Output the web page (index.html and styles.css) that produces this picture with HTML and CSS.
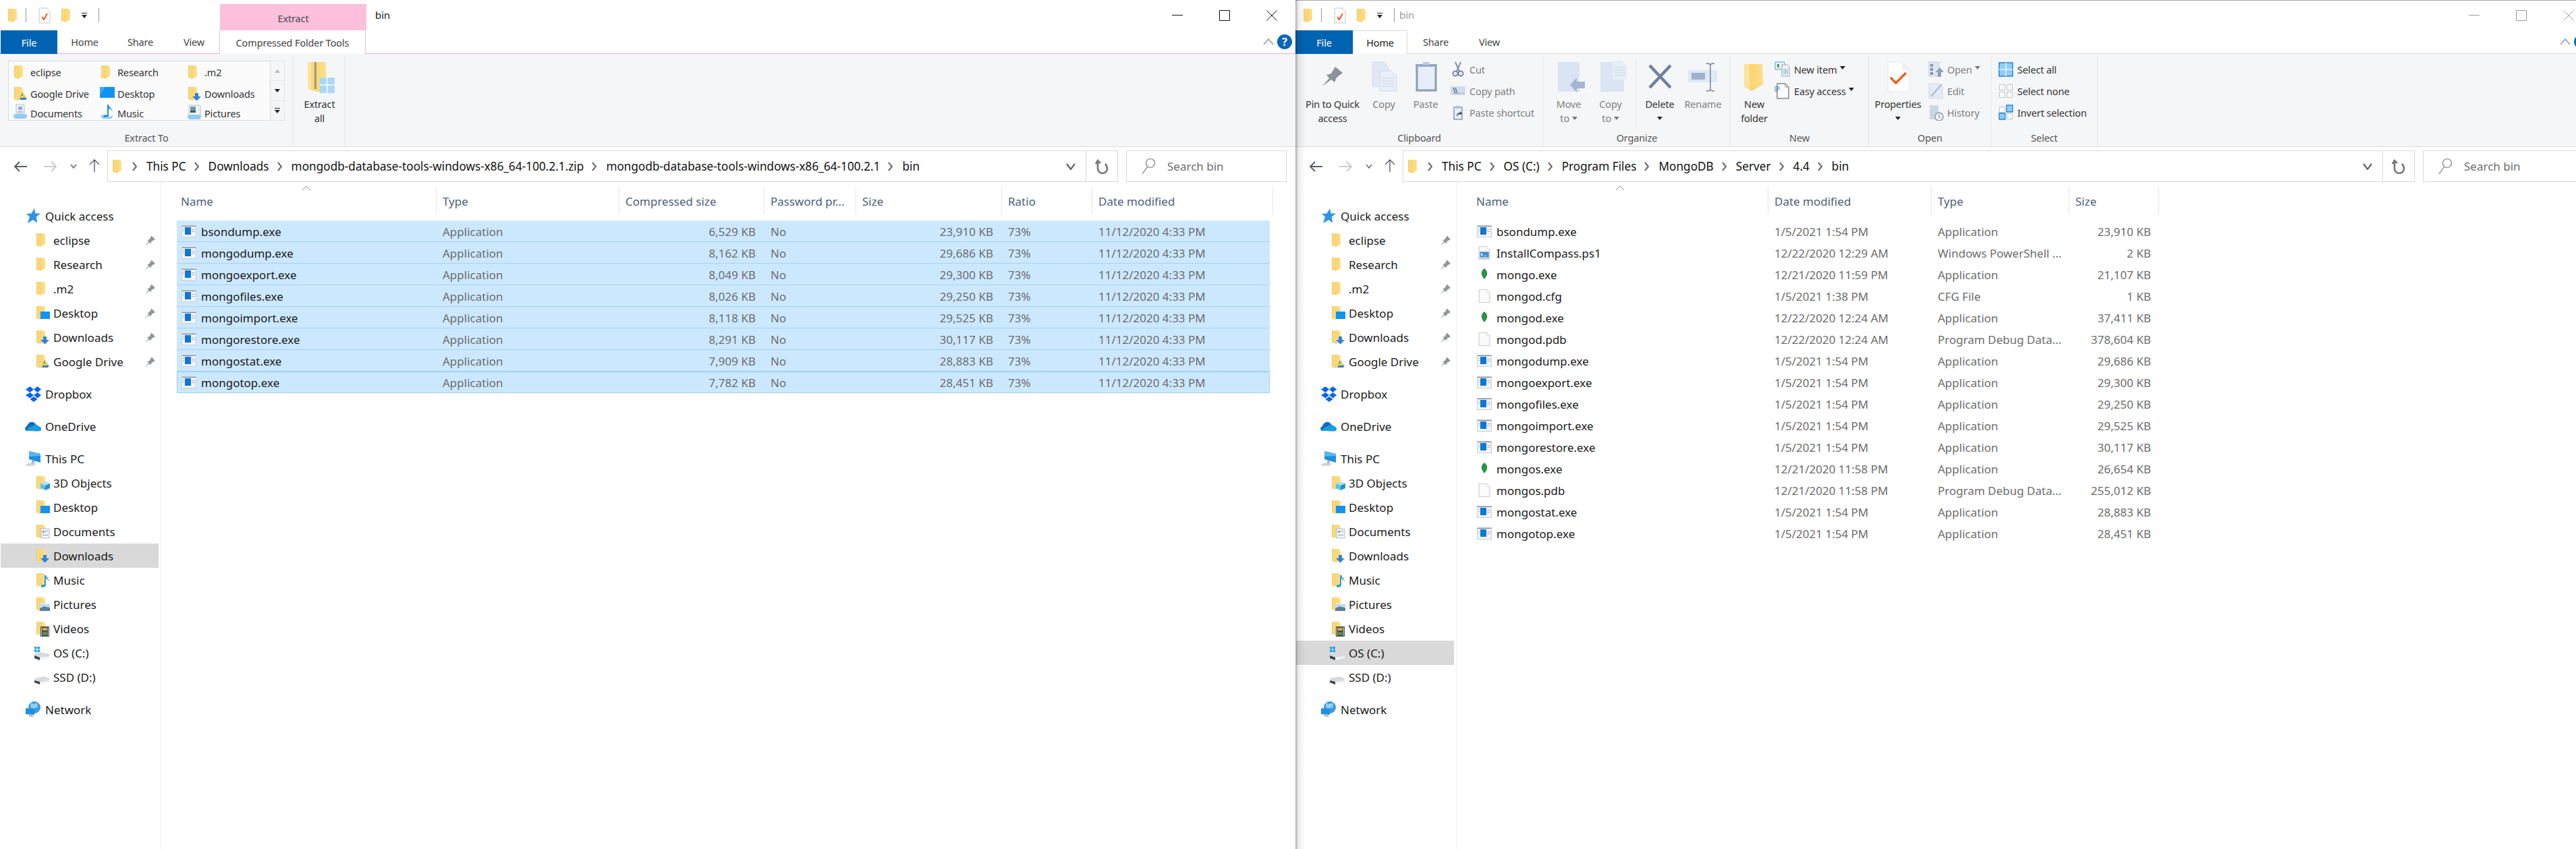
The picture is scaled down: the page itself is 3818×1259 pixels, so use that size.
FILE: index.html
```html
<!DOCTYPE html>
<html>
<head>
<meta charset="utf-8">
<title>bin</title>
<link rel="stylesheet" href="styles.css">
</head>
<body>

<!-- icon sprite -->
<svg class="sprite" xmlns="http://www.w3.org/2000/svg">
  <defs>
    <linearGradient id="fy" x1="0" x2="1" y1="0" y2="0">
      <stop offset="0" stop-color="#fde9ad"/><stop offset=".35" stop-color="#f9d46f"/><stop offset="1" stop-color="#fde08c"/>
    </linearGradient>
  </defs>
  <symbol id="fld" viewBox="0 0 24 24"><path d="M3 2h11l1 2h1v14l-7 4-6-2z" fill="url(#fy)"/><path d="M3 2h2v19l-2-1z" fill="#f3cf72"/></symbol>
  <symbol id="fld-desk" viewBox="0 0 24 24"><use href="#fld"/><path d="M9 10h14v11H9z" fill="#1193f1"/></symbol>
  <symbol id="fld-down" viewBox="0 0 24 24"><use href="#fld"/><path d="M13 11h5v5h4l-6.500 6.500L9 16h4z" fill="#2f82d8"/></symbol>
  <symbol id="fld-drive" viewBox="0 0 24 24"><use href="#fld"/><path d="M15 10l3 5h-4l-3 6z" fill="#1fa463"/><path d="M15 10h1l5 8h-5z" fill="#f4c63d"/><path d="M11 21h9l2-3h-9z" fill="#3277e0"/></symbol>
  <symbol id="fld-3d" viewBox="0 0 24 24"><use href="#fld"/><path d="M9 13l7-3 7 3-7 3z" fill="#a9e3f7"/><path d="M9 13l7 3v7l-7-3z" fill="#57c2ea"/><path d="M23 13l-7 3v7l7-3z" fill="#1c95c9"/></symbol>
  <symbol id="fld-docs" viewBox="0 0 24 24"><use href="#fld"/><path d="M10 8h12v14H10z" fill="#eef2f6" stroke="#b8bfc7"/><path d="M12 11h3v3h-3zM12 17h8v1h-8zM16 11h4v1h-4z" fill="#7ba6cf"/></symbol>
  <symbol id="fld-music" viewBox="0 0 24 24"><use href="#fld"/><path d="M15 5h2c1 4 5 5 5 10-1-3-3-4-5-5v10c0 2-3 3-5 3s-3-2-1-3.500c1-.8 3-1 4-.5z" fill="#2b9fdc"/></symbol>
  <symbol id="fld-pics" viewBox="0 0 24 24"><use href="#fld"/><path d="M8 11h15v11H8z" fill="#f0f3f6"/><path d="M8 18l6-3 9 2v5H8z" fill="#5b7f9c"/><path d="M8 12h15v4l-9-1-6 2z" fill="#b8dcf3"/></symbol>
  <symbol id="fld-video" viewBox="0 0 24 24"><use href="#fld"/><path d="M9 9h13v15H9z" fill="#3d4a52"/><path d="M12 11h7v4h-7z" fill="#d6a844"/><path d="M12 17h7v5h-7z" fill="#5e8a4e"/><path d="M10 10h1v13h-1zM20 10h1v13h-1z" fill="#cfd3d6"/></symbol>
  <symbol id="desk" viewBox="0 0 24 24"><path d="M1 2h22v16H1z" fill="#1193f1"/><path d="M1 2h8L1 14z" fill="#3aa8f5"/></symbol>
  <symbol id="docs" viewBox="0 0 24 24"><path d="M6 1h12v16H6z" fill="#eef2f6" stroke="#b8bfc7"/><path d="M9 4h6v5H9zM8 11h8v1H8zM8 13h8v1H8z" fill="#8db3d6"/><path d="M1 17l5-2h12l5 2-3 5H4z" fill="#8fcdf0"/></symbol>
  <symbol id="music" viewBox="0 0 24 24"><path d="M12 1h2c1 5 5 6 6 11-2-3-3-4-6-5v11c0 2-4 4-7 3s-2-4 1-4.500c1-.3 3-.5 4 0z" fill="#2390d8"/><path d="M2 18l4-2 1 4 9-1 5-2-3 5H5z" fill="#8fcdf0"/></symbol>
  <symbol id="pics" viewBox="0 0 24 24"><path d="M4 2h17v15H4z" fill="#eef2f6" stroke="#b8bfc7"/><path d="M6 4h8v9H6z" fill="#6d97b5"/><path d="M6 10h8v3H6z" fill="#3f5f46"/><path d="M1 18l5-2h12l5 2-3 5H4z" fill="#8fcdf0"/></symbol>

  <symbol id="star" viewBox="0 0 24 24"><path d="M14 1l1.500 7.500H23l-6 5 1 9-6-4.500L4 23l3-9.500L2 9l7.500-.5z" fill="#2e95e6"/></symbol>
  <symbol id="dropbox" viewBox="0 0 24 24"><path d="M7.500 1L1 5.500 7.500 10 13 5.500zM18.500 1L13 5.500 18.500 10 24 5.500zM1 14l6.500 4.500L13 14 7.500 10zM18.500 10L13 14l5.500 4.500L24 14zM7.500 20l5.500 4 5.500-4-5.500-4z" fill="#0a62f5"/></symbol>
  <symbol id="onedrive" viewBox="0 0 24 24"><path d="M2 19C-1 17 0 13 3 12c1-4 5-7 9-6 3 1 4 3 5 5l-8 8z" fill="#0f6cbd"/><path d="M2 19c-.5 0 21 1 21 0 2-2 1-7-3-7-2-3-7-3-9 1-3-1-7 2-9 6z" fill="#1a9ce0"/></symbol>
  <symbol id="pc" viewBox="0 0 24 24"><path d="M6 1l17 4v13L6 13z" fill="#1e8fe0"/><path d="M6 1l17 4v3L6 9z" fill="#58b7f0"/><path d="M10 15h4v5h-4z" fill="#a8b3bb"/><path d="M0 21l8-3 9 2-4 3H3z" fill="#d0d6da"/></symbol>
  <symbol id="net" viewBox="0 0 24 24"><circle cx="14" cy="9" r="9" fill="#3d9be0"/><path d="M9 2c3 3 7 2 9 0l1 6c-3 3-9 3-11 0z" fill="#8ed0f5"/><path d="M1 10l13 2v8L1 19z" fill="#1e8fe0"/><path d="M5 20h6l2 3H7z" fill="#b6c0c8"/></symbol>
  <symbol id="drive-win" viewBox="0 0 24 24"><path d="M0 3h3.500v3.500H0zM4.500 3H8v3.500H4.500zM0 7.500h3.500V11H0zM4.500 7.500H8V11H4.500z" fill="#17a5e6"/><path d="M0 13l8-2 14 3v3L8 23 0 20z" fill="#d7dadd"/><path d="M0 16l8 3v4l-8-3z" fill="#3d4347"/><path d="M8 19l14-2v3L8 23z" fill="#f2f3f4"/></symbol>
  <symbol id="drive" viewBox="0 0 24 24"><path d="M0 14l14-3 8 3v3L8 23l-8-3z" fill="#d7dadd"/><path d="M0 17l8 2v4l-8-3z" fill="#3d4347"/><path d="M8 19l14-2v3L8 23z" fill="#f2f3f4"/></symbol>
  <symbol id="pin" viewBox="0 0 16 16"><path d="M1 15l5-5.500-2-2 3-1 3-5 5 5-5 3-1 3-2-2z" fill="#8f9599"/></symbol>

  <symbol id="exe" viewBox="0 0 22 18"><path d="M0 0h22v18H0z" fill="#c9cdd0"/><path d="M1 1h20v16H1z" fill="#f3f5f6"/><path d="M1 1h20v1H1z" fill="#7a848c"/><path d="M5 3h9v11H5z" fill="#0b78d8"/><path d="M15 6h5v1h-5zM15 9h5v1h-5zM2 5h2v1H2zM2 8h2v1H2z" fill="#a8b0b6"/></symbol>
  <symbol id="leaf" viewBox="0 0 22 18"><path d="M11 0c3 3 5 5 4 9s-3 5-4 7c-1-2-3-3-4-7s1-6 4-9z" fill="#2a9240"/></symbol>
  <symbol id="file" viewBox="0 0 22 24"><path d="M1.500.5h14l5 5v18h-19z" fill="#fbfbfb" stroke="#bcbcbc"/><path d="M15.500.5v5h5" fill="#fff" stroke="#cfcfcf"/></symbol>
  <symbol id="ps1" viewBox="0 0 22 24"><use href="#file"/><path d="M3 10h16v10H3z" fill="#3b8fd6"/><path d="M5 12l4 3-4 3zM10 17h5v1h-5z" fill="#dff1ff"/><path d="M0 20h20v4H0z" fill="#cdd2d6"/></symbol>

  <!-- ribbon, large -->
  <symbol id="r-pin" viewBox="0 0 48 54"><path d="M9 38l10-12-4-5 7-2 6-10 11 9-9 7-3 7-5-4z" fill="#8b9498"/></symbol>
  <symbol id="r-copy" viewBox="0 0 48 54"><path d="M7 2h17l7 8v28H7z" fill="#e0e8f4" stroke="#d3ddec"/><path d="M18 15h17l8 8v22H18z" fill="#e9eff8" stroke="#ccd8e9"/><path d="M21 26h18M21 30h18M21 34h18M21 38h18" stroke="#cbd6e6"/></symbol>
  <symbol id="r-paste" viewBox="0 0 48 54"><path d="M11 7h28v37H11z" fill="#e6eefa" stroke="#8b9cba" stroke-width="3"/><path d="M9 5h32v4H9z" fill="#98a8c2"/><path d="M20 2h10v4H20z" fill="#c4cdd9"/></symbol>
  <symbol id="r-move" viewBox="0 0 48 54"><path d="M8 2h32v44H8z" fill="#dae4f2"/><path d="M26 36l10-11v6h12v10H36v6z" fill="#a2b5d1"/></symbol>
  <symbol id="r-copyto" viewBox="0 0 48 54"><path d="M9 2h22l13 13v31H9z" fill="#dae4f2"/><path d="M27 0h14l8 8v20H27z" fill="#e7eef8"/><path d="M30 10h16M30 14h16M30 18h16M30 22h16" stroke="#cad6e6"/></symbol>
  <symbol id="r-del" viewBox="0 0 48 54"><path d="M9 7l31 33M40 7L9 40" stroke="#6f819f" stroke-width="4.500" fill="none"/></symbol>
  <symbol id="r-rename" viewBox="0 0 48 54"><path d="M2 14h43v18H2z" fill="#dfe8f5"/><path d="M7 18h20v10H7z" fill="#9fb1cc"/><path d="M35 7v35M29 4c3 0 6 1 6 3 0-2 3-3 6-3M29 45c3 0 6-1 6-3 0 2 3 3 6 3" fill="none" stroke="#8a96a8" stroke-width="1.800"/></symbol>
  <symbol id="r-newf" viewBox="0 0 48 54"><path d="M9 5h27l1 26 1 4-18 10-11-7z" fill="url(#fy)"/><path d="M9 5h6l4 33-10 1z" fill="#fbe39e"/></symbol>
  <symbol id="r-prop" viewBox="0 0 48 54"><path d="M9 2h21l11 12v32H9z" fill="#fdfdfe" stroke="#e3e6ea"/><path d="M30 2v12h11" fill="#eef0f3"/><path d="M13 25l8 8 15-15" fill="none" stroke="#e8632a" stroke-width="3.500"/></symbol>
  <symbol id="r-extract" viewBox="0 0 48 54"><path d="M6 2h27v44l-12 0-15-4z" fill="url(#fy)"/><path d="M16 2h3v40h-3z" fill="#a39a84"/><path d="M24 25h22v23H24z" fill="#a9d8f6"/><path d="M35 25v23M24 36h22" stroke="#e6f4fc" stroke-width="2"/></symbol>

  <!-- ribbon, small -->
  <symbol id="s-cut" viewBox="0 0 24 24"><path d="M8 1l6 14M16 1l-6 14" stroke="#8792a6" stroke-width="2" fill="none"/><circle cx="8" cy="18" r="3.500" fill="none" stroke="#7888a3" stroke-width="2"/><circle cx="16" cy="18" r="3.500" fill="none" stroke="#7888a3" stroke-width="2"/></symbol>
  <symbol id="s-path" viewBox="0 0 24 24"><path d="M1 5h22v13H1z" fill="#cfdcee"/><path d="M5 7l3 9M8 7l3 9" stroke="#55627a" stroke-width="1.200"/><path d="M13 15h1v1h-1zM16 15h1v1h-1zM19 15h1v1h-1z" fill="#55627a"/></symbol>
  <symbol id="s-short" viewBox="0 0 24 24"><path d="M6 4h12v18H6z" fill="#e6eefa" stroke="#8b9cba" stroke-width="1.600"/><path d="M9 2h6v4H9z" fill="#b7c2d2"/><path d="M10 18c0-4 2-6 5-6v-2l3 3-3 3v-2c-2 0-3 1-5 4z" fill="#3c4a5e"/></symbol>
  <symbol id="s-newitem" viewBox="0 0 24 24"><path d="M1 1h14v11H1z" fill="#e9f2f8" stroke="#5aa4d4"/><path d="M4 4h3v5H4z" fill="#5f8a57"/><path d="M11 5h8l3 3v14H11z" fill="#eef1f5" stroke="#9aa4af"/><path d="M13 11h7v8h-7z" fill="#bcd1e8"/></symbol>
  <symbol id="s-easy" viewBox="0 0 24 24"><path d="M4 1h12l5 5v17H4z" fill="#fbfbfb" stroke="#4c4f52"/><path d="M16 1v5h5" fill="none" stroke="#8a8d90"/><path d="M0 6h8M0 9h8M0 12h5" stroke="#2a6fb0"/></symbol>
  <symbol id="s-open" viewBox="0 0 24 24"><path d="M2 1h15v21H2z" fill="#dfe6f0" stroke="#c4cedc"/><path d="M4 4h4v4H4zM4 10h4v4H4zM4 16h4v4H4z" fill="#8493aa"/><path d="M18 9l6 7h-4v7h-5v-7h-3z" fill="#8aa0bd"/></symbol>
  <symbol id="s-edit" viewBox="0 0 24 24"><path d="M2 1h14l6 5v17H2z" fill="#e3ebf5" stroke="#ced9e7"/><path d="M5 20L21 2" stroke="#a9b9cf" stroke-width="2"/></symbol>
  <symbol id="s-hist" viewBox="0 0 24 24"><path d="M3 1h13v21H3z" fill="#ccd7e6"/><circle cx="17" cy="18" r="6" fill="#eef1f5" stroke="#8e99a8" stroke-width="1.500"/><path d="M17 15v3l2 2" stroke="#66707e" fill="none"/></symbol>
  <symbol id="s-all" viewBox="0 0 24 24"><path d="M2 2h20v20H2z" fill="#90ccf6" stroke="#1e88d8" stroke-width="1.500"/><path d="M12 2v20M2 12h20" stroke="#e9f6fe" stroke-width="1.500"/></symbol>
  <symbol id="s-none" viewBox="0 0 24 24"><path d="M2.500 2.500h8v8h-8zM13.500 2.500h8v8h-8zM2.500 13.500h8v8h-8zM13.500 13.500h8v8h-8z" fill="#fafbfc" stroke="#bfc4ca"/></symbol>
  <symbol id="s-inv" viewBox="0 0 24 24"><path d="M2.500 3.500h8v8h-8zM13.500 13.500h8v8h-8z" fill="#fafbfc" stroke="#bfc4ca"/><path d="M13 1h9v10h-9zM2 13h9v9H2z" fill="#90ccf6" stroke="#1e88d8" stroke-width="1.300"/></symbol>
  <symbol id="q-check" viewBox="0 0 24 24"><path d="M4 1h11l5 5v17H4z" fill="#fdfdfd" stroke="#c6c6c6"/><path d="M8 14l3 4 5-9" fill="none" stroke="#e3521f" stroke-width="1.800"/></symbol>
</svg>

<!-- left window: inside the zip -->
<div class="window win-zip">
  <div class="titlebar">
    <div class="qat">
      <svg class="ico"><use href="#fld"/></svg>
      <i class="q-sep"></i>
      <svg class="ico q-gap"><use href="#q-check"/></svg>
      <svg class="ico"><use href="#fld"/></svg>
      <span class="q-drop"><b></b><i class="caret"></i></span>
      <i class="q-sep q-end"></i>
    </div>
    <div class="context-tab">Extract</div>
    <div class="title title-zip">bin</div>
    <div class="winbtns">
      <span class="wb"><svg class="wb-ico"><path d="M0 7.500h16" /></svg></span>
      <span class="wb"><svg class="wb-ico"><path d="M.5.5h15v15H.5z" /></svg></span>
      <span class="wb"><svg class="wb-ico"><path d="M.5.5l15 15M15.500.5l-15 15" /></svg></span>
    </div>
  </div>

  <div class="tabs tabs-zip">
    <div class="tab tab-file tab-file-zip">File</div>
    <div class="tab tab-home">Home</div>
    <div class="tab tab-share">Share</div>
    <div class="tab tab-view">View</div>
    <div class="tab tab-tools">Compressed Folder Tools</div>
    <div class="tabs-end">
      <svg class="collapse"><path d="M1 10l7-8 7 8"/></svg>
      <span class="help">?</span>
    </div>
  </div>

  <div class="ribbon">
    <div class="group g-extract-to">
      <div class="group-main gallery-wrap">
        <div class="gallery">
          <div class="g-item"><svg class="ico"><use href="#fld"/></svg>eclipse</div>
          <div class="g-item"><svg class="ico"><use href="#fld"/></svg>Research</div>
          <div class="g-item"><svg class="ico"><use href="#fld"/></svg>.m2</div>
          <div class="g-item"><svg class="ico"><use href="#fld-drive"/></svg>Google Drive</div>
          <div class="g-item"><svg class="ico"><use href="#desk"/></svg>Desktop</div>
          <div class="g-item"><svg class="ico"><use href="#fld-down"/></svg>Downloads</div>
          <div class="g-item"><svg class="ico"><use href="#docs"/></svg>Documents</div>
          <div class="g-item"><svg class="ico"><use href="#music"/></svg>Music</div>
          <div class="g-item"><svg class="ico"><use href="#pics"/></svg>Pictures</div>
        </div>
        <div class="gallery-scroll">
          <span class="gs"><i class="caret caret-up"></i></span>
          <span class="gs"><i class="caret"></i></span>
          <span class="gs"><b></b><i class="caret"></i></span>
        </div>
      </div>
      <div class="group-label">Extract To</div>
    </div>
    <div class="group g-extract-all">
      <div class="group-main">
        <div class="lg lg-full"><svg class="lg-ico"><use href="#r-extract"/></svg><span class="lg-label">Extract<br>all</span></div>
      </div>
      <div class="group-label"></div>
    </div>
  </div>

  <div class="addrbar">
    <div class="navbtns">
      <svg class="arrow"><path d="M20 8H2M9 1L2 8l7 7"/></svg>
      <svg class="arrow arrow-off"><path d="M0 8h18M11 1l7 7-7 7"/></svg>
      <svg class="mini-chev"><path d="M1 1l4 5 4-5"/></svg>
      <svg class="arrow-up"><path d="M8 20V2M1 9l7-7 7 7"/></svg>
    </div>
    <div class="addr">
      <svg class="ico addr-folder"><use href="#fld"/></svg>
      <svg class="crumb-sep"><path d="M1 1l5 6-5 6"/></svg><span>This PC</span>
      <svg class="crumb-sep"><path d="M1 1l5 6-5 6"/></svg><span>Downloads</span>
      <svg class="crumb-sep"><path d="M1 1l5 6-5 6"/></svg><span>mongodb-database-tools-windows-x86_64-100.2.1.zip</span>
      <svg class="crumb-sep"><path d="M1 1l5 6-5 6"/></svg><span>mongodb-database-tools-windows-x86_64-100.2.1</span>
      <svg class="crumb-sep"><path d="M1 1l5 6-5 6"/></svg><span>bin</span>
      <span class="addr-drop"><svg class="drop-chev"><path d="M1 1l6 8 6-8"/></svg></span>
      <span class="addr-refresh"><svg class="refresh"><path d="M4 4v10a7 7 0 0 0 14 0c0-3-1-5-3-7M1 7l3-5 4 4"/></svg></span>
    </div>
    <div class="search"><svg class="lens"><circle cx="14" cy="8" r="6.500"/><path d="M10 13L2 24"/></svg>Search bin</div>
  </div>

  <div class="body">
    <div class="nav">
      <div class="nav-group">
        <div class="nav-row top"><svg class="ico"><use href="#star"/></svg>Quick access</div>
        <div class="nav-row"><svg class="ico"><use href="#fld"/></svg>eclipse<svg class="pin"><use href="#pin"/></svg></div>
        <div class="nav-row"><svg class="ico"><use href="#fld"/></svg>Research<svg class="pin"><use href="#pin"/></svg></div>
        <div class="nav-row"><svg class="ico"><use href="#fld"/></svg>.m2<svg class="pin"><use href="#pin"/></svg></div>
        <div class="nav-row"><svg class="ico"><use href="#fld-desk"/></svg>Desktop<svg class="pin"><use href="#pin"/></svg></div>
        <div class="nav-row"><svg class="ico"><use href="#fld-down"/></svg>Downloads<svg class="pin"><use href="#pin"/></svg></div>
        <div class="nav-row"><svg class="ico"><use href="#fld-drive"/></svg>Google Drive<svg class="pin"><use href="#pin"/></svg></div>
      </div>
      <div class="nav-group"><div class="nav-row top"><svg class="ico"><use href="#dropbox"/></svg>Dropbox</div></div>
      <div class="nav-group"><div class="nav-row top"><svg class="ico"><use href="#onedrive"/></svg>OneDrive</div></div>
      <div class="nav-group">
        <div class="nav-row top"><svg class="ico"><use href="#pc"/></svg>This PC</div>
        <div class="nav-row"><svg class="ico"><use href="#fld-3d"/></svg>3D Objects</div>
        <div class="nav-row"><svg class="ico"><use href="#fld-desk"/></svg>Desktop</div>
        <div class="nav-row"><svg class="ico"><use href="#fld-docs"/></svg>Documents</div>
        <div class="nav-row active"><svg class="ico"><use href="#fld-down"/></svg>Downloads</div>
        <div class="nav-row"><svg class="ico"><use href="#fld-music"/></svg>Music</div>
        <div class="nav-row"><svg class="ico"><use href="#fld-pics"/></svg>Pictures</div>
        <div class="nav-row"><svg class="ico"><use href="#fld-video"/></svg>Videos</div>
        <div class="nav-row"><svg class="ico"><use href="#drive-win"/></svg>OS (C:)</div>
        <div class="nav-row"><svg class="ico"><use href="#drive"/></svg>SSD (D:)</div>
      </div>
      <div class="nav-group"><div class="nav-row top"><svg class="ico"><use href="#net"/></svg>Network</div></div>
    </div>

    <div class="list">
      <div class="head cols-zip">
        <span class="hcell"><svg class="sort"><path d="M1 7l6-6 6 6"/></svg>Name</span>
        <span class="hcell">Type</span>
        <span class="hcell">Compressed size</span>
        <span class="hcell">Password pr...</span>
        <span class="hcell">Size</span>
        <span class="hcell">Ratio</span>
        <span class="hcell">Date modified</span>
      </div>
      <div class="row sel cols-zip"><span class="cell name"><svg class="fi"><use href="#exe"/></svg>bsondump.exe</span><span class="cell">Application</span><span class="cell num">6,529 KB</span><span class="cell">No</span><span class="cell num">23,910 KB</span><span class="cell">73%</span><span class="cell">11/12/2020 4:33 PM</span></div>
      <div class="row sel cols-zip"><span class="cell name"><svg class="fi"><use href="#exe"/></svg>mongodump.exe</span><span class="cell">Application</span><span class="cell num">8,162 KB</span><span class="cell">No</span><span class="cell num">29,686 KB</span><span class="cell">73%</span><span class="cell">11/12/2020 4:33 PM</span></div>
      <div class="row sel cols-zip"><span class="cell name"><svg class="fi"><use href="#exe"/></svg>mongoexport.exe</span><span class="cell">Application</span><span class="cell num">8,049 KB</span><span class="cell">No</span><span class="cell num">29,300 KB</span><span class="cell">73%</span><span class="cell">11/12/2020 4:33 PM</span></div>
      <div class="row sel cols-zip"><span class="cell name"><svg class="fi"><use href="#exe"/></svg>mongofiles.exe</span><span class="cell">Application</span><span class="cell num">8,026 KB</span><span class="cell">No</span><span class="cell num">29,250 KB</span><span class="cell">73%</span><span class="cell">11/12/2020 4:33 PM</span></div>
      <div class="row sel cols-zip"><span class="cell name"><svg class="fi"><use href="#exe"/></svg>mongoimport.exe</span><span class="cell">Application</span><span class="cell num">8,118 KB</span><span class="cell">No</span><span class="cell num">29,525 KB</span><span class="cell">73%</span><span class="cell">11/12/2020 4:33 PM</span></div>
      <div class="row sel cols-zip"><span class="cell name"><svg class="fi"><use href="#exe"/></svg>mongorestore.exe</span><span class="cell">Application</span><span class="cell num">8,291 KB</span><span class="cell">No</span><span class="cell num">30,117 KB</span><span class="cell">73%</span><span class="cell">11/12/2020 4:33 PM</span></div>
      <div class="row sel cols-zip"><span class="cell name"><svg class="fi"><use href="#exe"/></svg>mongostat.exe</span><span class="cell">Application</span><span class="cell num">7,909 KB</span><span class="cell">No</span><span class="cell num">28,883 KB</span><span class="cell">73%</span><span class="cell">11/12/2020 4:33 PM</span></div>
      <div class="row sel focus cols-zip"><span class="cell name"><svg class="fi"><use href="#exe"/></svg>mongotop.exe</span><span class="cell">Application</span><span class="cell num">7,782 KB</span><span class="cell">No</span><span class="cell num">28,451 KB</span><span class="cell">73%</span><span class="cell">11/12/2020 4:33 PM</span></div>
    </div>
  </div>
</div>

<!-- right window: program files -->
<div class="window win-db">
  <div class="titlebar">
    <div class="qat">
      <svg class="ico"><use href="#fld"/></svg>
      <i class="q-sep"></i>
      <svg class="ico q-gap"><use href="#q-check"/></svg>
      <svg class="ico"><use href="#fld"/></svg>
      <span class="q-drop"><b></b><i class="caret"></i></span>
      <i class="q-sep q-end"></i>
    </div>
    <div class="title title-db">bin</div>
    <div class="winbtns winbtns-off">
      <span class="wb"><svg class="wb-ico"><path d="M0 7.500h16" /></svg></span>
      <span class="wb"><svg class="wb-ico"><path d="M.5.5h15v15H.5z" /></svg></span>
      <span class="wb"><svg class="wb-ico"><path d="M.5.5l15 15M15.500.5l-15 15" /></svg></span>
    </div>
  </div>

  <div class="tabs">
    <div class="tab tab-file">File</div>
    <div class="tab tab-home on">Home</div>
    <div class="tab tab-share">Share</div>
    <div class="tab tab-view">View</div>
    <div class="tabs-end">
      <svg class="collapse"><path d="M1 10l7-8 7 8"/></svg>
      <span class="help"></span>
    </div>
  </div>

  <div class="ribbon">
    <div class="group g-clipboard">
      <div class="group-main">
        <div class="lg lg-pin"><svg class="lg-ico"><use href="#r-pin"/></svg><span class="lg-label">Pin to Quick<br>access</span></div>
        <div class="lg off"><svg class="lg-ico"><use href="#r-copy"/></svg><span class="lg-label">Copy</span></div>
        <div class="lg off"><svg class="lg-ico"><use href="#r-paste"/></svg><span class="lg-label">Paste</span></div>
        <div class="smalls smalls-clip">
          <div class="sm off"><svg class="ico"><use href="#s-cut"/></svg>Cut</div>
          <div class="sm off"><svg class="ico"><use href="#s-path"/></svg>Copy path</div>
          <div class="sm off"><svg class="ico"><use href="#s-short"/></svg>Paste shortcut</div>
        </div>
      </div>
      <div class="group-label">Clipboard</div>
    </div>
    <div class="group g-organize">
      <div class="group-main">
        <div class="lg off"><svg class="lg-ico"><use href="#r-move"/></svg><span class="lg-label">Move<br>to <i class="caret"></i></span></div>
        <div class="lg off"><svg class="lg-ico"><use href="#r-copyto"/></svg><span class="lg-label">Copy<br>to <i class="caret"></i></span></div>
        <i class="inner-sep"></i>
        <div class="lg"><svg class="lg-ico"><use href="#r-del"/></svg><span class="lg-label">Delete<br><i class="caret"></i></span></div>
        <div class="lg lg-rename off"><svg class="lg-ico"><use href="#r-rename"/></svg><span class="lg-label">Rename</span></div>
      </div>
      <div class="group-label">Organize</div>
    </div>
    <div class="group g-new">
      <div class="group-main">
        <div class="lg lg-newf"><svg class="lg-ico"><use href="#r-newf"/></svg><span class="lg-label">New<br>folder</span></div>
        <div class="smalls">
          <div class="sm"><svg class="ico"><use href="#s-newitem"/></svg>New item <i class="caret"></i></div>
          <div class="sm"><svg class="ico"><use href="#s-easy"/></svg>Easy access <i class="caret"></i></div>
        </div>
      </div>
      <div class="group-label">New</div>
    </div>
    <div class="group g-open">
      <div class="group-main">
        <div class="lg lg-prop"><svg class="lg-ico"><use href="#r-prop"/></svg><span class="lg-label">Properties<br><i class="caret"></i></span></div>
        <div class="smalls smalls-open">
          <div class="sm off"><svg class="ico"><use href="#s-open"/></svg>Open <i class="caret"></i></div>
          <div class="sm off"><svg class="ico"><use href="#s-edit"/></svg>Edit</div>
          <div class="sm off"><svg class="ico"><use href="#s-hist"/></svg>History</div>
        </div>
      </div>
      <div class="group-label">Open</div>
    </div>
    <div class="group g-select">
      <div class="group-main">
        <div class="smalls">
          <div class="sm"><svg class="ico"><use href="#s-all"/></svg>Select all</div>
          <div class="sm"><svg class="ico"><use href="#s-none"/></svg>Select none</div>
          <div class="sm"><svg class="ico"><use href="#s-inv"/></svg>Invert selection</div>
        </div>
      </div>
      <div class="group-label">Select</div>
    </div>
  </div>

  <div class="addrbar">
    <div class="navbtns">
      <svg class="arrow"><path d="M20 8H2M9 1L2 8l7 7"/></svg>
      <svg class="arrow arrow-off"><path d="M0 8h18M11 1l7 7-7 7"/></svg>
      <svg class="mini-chev"><path d="M1 1l4 5 4-5"/></svg>
      <svg class="arrow-up"><path d="M8 20V2M1 9l7-7 7 7"/></svg>
    </div>
    <div class="addr">
      <svg class="ico addr-folder"><use href="#fld"/></svg>
      <svg class="crumb-sep"><path d="M1 1l5 6-5 6"/></svg><span>This PC</span>
      <svg class="crumb-sep"><path d="M1 1l5 6-5 6"/></svg><span>OS (C:)</span>
      <svg class="crumb-sep"><path d="M1 1l5 6-5 6"/></svg><span>Program Files</span>
      <svg class="crumb-sep"><path d="M1 1l5 6-5 6"/></svg><span>MongoDB</span>
      <svg class="crumb-sep"><path d="M1 1l5 6-5 6"/></svg><span>Server</span>
      <svg class="crumb-sep"><path d="M1 1l5 6-5 6"/></svg><span>4.4</span>
      <svg class="crumb-sep"><path d="M1 1l5 6-5 6"/></svg><span>bin</span>
      <span class="addr-drop"><svg class="drop-chev"><path d="M1 1l6 8 6-8"/></svg></span>
      <span class="addr-refresh"><svg class="refresh"><path d="M4 4v10a7 7 0 0 0 14 0c0-3-1-5-3-7M1 7l3-5 4 4"/></svg></span>
    </div>
    <div class="search"><svg class="lens"><circle cx="14" cy="8" r="6.500"/><path d="M10 13L2 24"/></svg>Search bin</div>
  </div>

  <div class="body">
    <div class="nav">
      <div class="nav-group">
        <div class="nav-row top"><svg class="ico"><use href="#star"/></svg>Quick access</div>
        <div class="nav-row"><svg class="ico"><use href="#fld"/></svg>eclipse<svg class="pin"><use href="#pin"/></svg></div>
        <div class="nav-row"><svg class="ico"><use href="#fld"/></svg>Research<svg class="pin"><use href="#pin"/></svg></div>
        <div class="nav-row"><svg class="ico"><use href="#fld"/></svg>.m2<svg class="pin"><use href="#pin"/></svg></div>
        <div class="nav-row"><svg class="ico"><use href="#fld-desk"/></svg>Desktop<svg class="pin"><use href="#pin"/></svg></div>
        <div class="nav-row"><svg class="ico"><use href="#fld-down"/></svg>Downloads<svg class="pin"><use href="#pin"/></svg></div>
        <div class="nav-row"><svg class="ico"><use href="#fld-drive"/></svg>Google Drive<svg class="pin"><use href="#pin"/></svg></div>
      </div>
      <div class="nav-group"><div class="nav-row top"><svg class="ico"><use href="#dropbox"/></svg>Dropbox</div></div>
      <div class="nav-group"><div class="nav-row top"><svg class="ico"><use href="#onedrive"/></svg>OneDrive</div></div>
      <div class="nav-group">
        <div class="nav-row top"><svg class="ico"><use href="#pc"/></svg>This PC</div>
        <div class="nav-row"><svg class="ico"><use href="#fld-3d"/></svg>3D Objects</div>
        <div class="nav-row"><svg class="ico"><use href="#fld-desk"/></svg>Desktop</div>
        <div class="nav-row"><svg class="ico"><use href="#fld-docs"/></svg>Documents</div>
        <div class="nav-row"><svg class="ico"><use href="#fld-down"/></svg>Downloads</div>
        <div class="nav-row"><svg class="ico"><use href="#fld-music"/></svg>Music</div>
        <div class="nav-row"><svg class="ico"><use href="#fld-pics"/></svg>Pictures</div>
        <div class="nav-row"><svg class="ico"><use href="#fld-video"/></svg>Videos</div>
        <div class="nav-row active"><svg class="ico"><use href="#drive-win"/></svg>OS (C:)</div>
        <div class="nav-row"><svg class="ico"><use href="#drive"/></svg>SSD (D:)</div>
      </div>
      <div class="nav-group"><div class="nav-row top"><svg class="ico"><use href="#net"/></svg>Network</div></div>
    </div>

    <div class="list">
      <div class="head cols-db">
        <span class="hcell"><svg class="sort"><path d="M1 7l6-6 6 6"/></svg>Name</span>
        <span class="hcell">Date modified</span>
        <span class="hcell">Type</span>
        <span class="hcell">Size</span>
      </div>
      <div class="row cols-db"><span class="cell name"><svg class="fi"><use href="#exe"/></svg>bsondump.exe</span><span class="cell">1/5/2021 1:54 PM</span><span class="cell">Application</span><span class="cell num">23,910 KB</span></div>
      <div class="row cols-db"><span class="cell name"><svg class="fi"><use href="#ps1"/></svg>InstallCompass.ps1</span><span class="cell">12/22/2020 12:29 AM</span><span class="cell">Windows PowerShell ...</span><span class="cell num">2 KB</span></div>
      <div class="row cols-db"><span class="cell name"><svg class="fi"><use href="#leaf"/></svg>mongo.exe</span><span class="cell">12/21/2020 11:59 PM</span><span class="cell">Application</span><span class="cell num">21,107 KB</span></div>
      <div class="row cols-db"><span class="cell name"><svg class="fi"><use href="#file"/></svg>mongod.cfg</span><span class="cell">1/5/2021 1:38 PM</span><span class="cell">CFG File</span><span class="cell num">1 KB</span></div>
      <div class="row cols-db"><span class="cell name"><svg class="fi"><use href="#leaf"/></svg>mongod.exe</span><span class="cell">12/22/2020 12:24 AM</span><span class="cell">Application</span><span class="cell num">37,411 KB</span></div>
      <div class="row cols-db"><span class="cell name"><svg class="fi"><use href="#file"/></svg>mongod.pdb</span><span class="cell">12/22/2020 12:24 AM</span><span class="cell">Program Debug Data...</span><span class="cell num">378,604 KB</span></div>
      <div class="row cols-db"><span class="cell name"><svg class="fi"><use href="#exe"/></svg>mongodump.exe</span><span class="cell">1/5/2021 1:54 PM</span><span class="cell">Application</span><span class="cell num">29,686 KB</span></div>
      <div class="row cols-db"><span class="cell name"><svg class="fi"><use href="#exe"/></svg>mongoexport.exe</span><span class="cell">1/5/2021 1:54 PM</span><span class="cell">Application</span><span class="cell num">29,300 KB</span></div>
      <div class="row cols-db"><span class="cell name"><svg class="fi"><use href="#exe"/></svg>mongofiles.exe</span><span class="cell">1/5/2021 1:54 PM</span><span class="cell">Application</span><span class="cell num">29,250 KB</span></div>
      <div class="row cols-db"><span class="cell name"><svg class="fi"><use href="#exe"/></svg>mongoimport.exe</span><span class="cell">1/5/2021 1:54 PM</span><span class="cell">Application</span><span class="cell num">29,525 KB</span></div>
      <div class="row cols-db"><span class="cell name"><svg class="fi"><use href="#exe"/></svg>mongorestore.exe</span><span class="cell">1/5/2021 1:54 PM</span><span class="cell">Application</span><span class="cell num">30,117 KB</span></div>
      <div class="row cols-db"><span class="cell name"><svg class="fi"><use href="#leaf"/></svg>mongos.exe</span><span class="cell">12/21/2020 11:58 PM</span><span class="cell">Application</span><span class="cell num">26,654 KB</span></div>
      <div class="row cols-db"><span class="cell name"><svg class="fi"><use href="#file"/></svg>mongos.pdb</span><span class="cell">12/21/2020 11:58 PM</span><span class="cell">Program Debug Data...</span><span class="cell num">255,012 KB</span></div>
      <div class="row cols-db"><span class="cell name"><svg class="fi"><use href="#exe"/></svg>mongostat.exe</span><span class="cell">1/5/2021 1:54 PM</span><span class="cell">Application</span><span class="cell num">28,883 KB</span></div>
      <div class="row cols-db"><span class="cell name"><svg class="fi"><use href="#exe"/></svg>mongotop.exe</span><span class="cell">1/5/2021 1:54 PM</span><span class="cell">Application</span><span class="cell num">28,451 KB</span></div>
    </div>
  </div>
</div>

</body>
</html>
```

FILE: styles.css
```css
* {
  box-sizing: border-box;
}

body {
  margin: 0;
  display: flex;
  width: 3818px;
  height: 1259px;
  overflow: hidden;
  background: #fff;
  font-family: "Noto Sans", "Open Sans", sans-serif;
  font-size: 17px;
  color: #1a1a1a;
}

svg {
  flex: none;
  display: block;
}

i {
  font-style: normal;
}

.sprite {
  width: 0;
  height: 0;
}

.ico {
  width: 24px;
  height: 24px;
}

/* Windows */
.window {
  flex: none;
  display: flex;
  flex-direction: column;
  height: 1259px;
  position: relative;
  background: #fff;
}

.win-zip {
  width: 1920px;
}

.win-db {
  width: 1922px;
}

/* the shadow the right window throws on its left side, plus its top line */
.win-db::before {
  content: "";
  position: absolute;
  left: 0;
  top: 0;
  bottom: 0;
  width: 15px;
  background: linear-gradient(to right, rgba(0, 0, 0, .32), rgba(0, 0, 0, .07) 30%, rgba(0, 0, 0, 0));
  z-index: 2;
  pointer-events: none;
}

.win-db::after {
  content: "";
  position: absolute;
  left: 0;
  right: 0;
  top: 0;
  height: 1px;
  background: #a9a9a9;
}

/* Title bar */
.titlebar {
  display: flex;
  height: 45px;
  flex: none;
}

.qat {
  display: flex;
  align-items: center;
  padding-left: 9px;
}

.q-sep {
  width: 1px;
  height: 21px;
  margin: 0 15px 0 5px;
  background: #9a9a9a;
}

.q-end {
  margin: 0 7px 0 10px;
}

.q-gap {
  margin-right: 10px;
}

.q-drop {
  width: 22px;
  margin-left: 2px;
  display: flex;
  flex-direction: column;
  align-items: center;
  gap: 2px;
}

.q-drop b,
.gs b {
  display: block;
  width: 8px;
  height: 1px;
  background: #222;
}

.caret {
  display: inline-block;
  width: 0;
  height: 0;
  border-left: 4px solid transparent;
  border-right: 4px solid transparent;
  border-top: 5px solid #222;
  vertical-align: 3px;
}

.context-tab {
  width: 217px;
  height: 39px;
  margin: 6px 0 0 172px;
  padding-top: 11px;
  background: #fcc0dc;
  color: #4a4a4a;
  text-align: center;
  font-size: 14.5px;
  letter-spacing: -.15px;
}

.title {
  padding-top: 12px;
  font-size: 15px;
}

.title-zip {
  margin-left: 13px;
  color: #1a1a1a;
}

.title-db {
  color: #999;
}

.winbtns {
  display: flex;
  margin-left: auto;
  align-items: center;
}

.wb {
  width: 70px;
  display: flex;
  justify-content: center;
}

.wb-ico {
  width: 16px;
  height: 16px;
  fill: none;
  stroke: #111;
  stroke-width: 1;
}

.winbtns-off .wb-ico {
  stroke: #9a9a9a;
}

/* Ribbon tabs */
.tabs {
  display: flex;
  flex: none;
  height: 35px;
  border-bottom: 1px solid #dadbdc;
  color: #444;
  font-size: 14.5px;
  letter-spacing: -.15px;
}

.tabs-zip {
  border-bottom-color: #f3a8cd;
}

.tab {
  flex: none;
  display: flex;
  align-items: center;
  justify-content: center;
}

.tab-file {
  width: 85px;
  background: #0063b1;
  color: #fff;
  margin-bottom: -1px;
}

.tab-file-zip {
  width: 84px;
  margin-left: 1px;
}

.tab-home {
  width: 81px;
}

.tab-home.on {
  background: #fff;
  border: 1px solid #dadbdc;
  border-bottom: none;
  margin-bottom: -1px;
  color: #222;
}

.tab-share {
  width: 84px;
}

.tab-view {
  width: 75px;
}

.tab-tools {
  width: 217px;
  background: #fff;
  border: 1px solid #dbc6d0;
  border-width: 0 1px;
  margin-bottom: -1px;
}

.tabs-end {
  margin-left: auto;
  display: flex;
  align-items: center;
  gap: 5px;
  padding-right: 5px;
}

.collapse {
  width: 16px;
  height: 12px;
  fill: none;
  stroke: #a0a0a0;
  stroke-width: 1.8;
}

.help {
  width: 22px;
  height: 22px;
  border-radius: 50%;
  background: #0a66b8;
  color: #fff;
  font-size: 16px;
  font-weight: 700;
  line-height: 22px;
  text-align: center;
}

/* Ribbon body */
.ribbon {
  display: flex;
  flex: none;
  height: 138px;
  background: #f5f6f7;
  border-bottom: 1px solid #dadbdc;
  font-size: 14.5px;
  letter-spacing: -.15px;
}

.group {
  flex: none;
  display: flex;
  flex-direction: column;
  margin: 3px 0 1px;
  border-right: 1px solid #e4e6e8;
}

.group-main {
  display: flex;
  height: 109px;
  padding-top: 7px;
}

.group-label {
  height: 24px;
  line-height: 24px;
  text-align: center;
  color: #555;
}

.g-extract-to { width: 435px; }
.g-extract-all { width: 77px; }
.g-clipboard { width: 368px; }
.g-organize { width: 277px; }
.g-new { width: 205px; }
.g-open { width: 182px; }
.g-select { width: 157px; }

.g-clipboard .group-main { padding-left: 10px; }
.g-organize .group-main { padding-left: 6px; }
.g-new .group-main { padding-left: 5px; }
.g-open .group-main { padding-left: 6px; }
.g-select .group-main { padding-left: 9px; }

/* large button: icon over a one or two line label */
.lg {
  flex: none;
  width: 62px;
  display: flex;
  flex-direction: column;
  align-items: center;
  line-height: 21px;
  white-space: nowrap;
  color: #333;
}

.lg.off,
.sm.off {
  color: #808080;
}

.lg-ico {
  width: 48px;
  height: 54px;
}

.lg-label {
  text-align: center;
}

.lg-pin { width: 90px; }
.lg-rename { width: 66px; }
.lg-newf { width: 60px; }
.lg-prop { width: 74px; }
.lg-full { width: 77px; }

.inner-sep {
  flex: none;
  width: 1px;
  height: 100px;
  margin: 0 4px 0 6px;
  background: #e4e6e8;
}

.smalls {
  flex: none;
  display: flex;
  flex-direction: column;
  margin-top: -3px;
}

.smalls-clip { margin-left: 5px; }
.smalls-open { margin-left: 7px; }

.sm {
  display: flex;
  align-items: center;
  height: 32px;
  gap: 5px;
  color: #333;
  white-space: nowrap;
}

.sm .caret {
  margin-left: -1px;
  align-self: center;
  margin-bottom: 6px;
}

.off .caret {
  border-top-color: #777;
}

/* the extract-to gallery */
.gallery-wrap {
  padding-left: 12px;
}

.gallery {
  display: grid;
  grid-template-columns: repeat(3, 129px);
  grid-template-rows: 32px 32px 23px;
  width: 389px;
  height: 89px;
  overflow: hidden;
  background: #fbfbfc;
  border: 1px solid #d9dbdd;
}

.g-item {
  display: flex;
  align-items: center;
  gap: 3px;
  padding-left: 5px;
  white-space: nowrap;
  color: #333;
}

.g-item:nth-child(n+7) {
  align-items: flex-end;
  line-height: 20px;
}

.gallery-scroll {
  width: 21px;
  height: 89px;
  display: flex;
  flex-direction: column;
  border: 1px solid #e6e7e9;
  border-left: none;
}

.gs {
  flex: 1;
  display: flex;
  flex-direction: column;
  align-items: center;
  justify-content: center;
  gap: 2px;
  border-bottom: 1px solid #e6e7e9;
}

.gs:last-child {
  border-bottom: none;
}

.caret-up {
  border-top: none;
  border-bottom: 5px solid #b5b5b5;
}

/* Address bar */
.addrbar {
  display: flex;
  flex: none;
  height: 52px;
  padding: 5px 13px 0 0;
  gap: 12px;
}

.navbtns {
  flex: none;
  width: 147px;
  display: flex;
  align-items: center;
  padding-left: 20px;
}

.arrow {
  width: 20px;
  height: 16px;
  fill: none;
  stroke: #5a5f66;
  stroke-width: 2;
}

.arrow-off {
  margin-left: 25px;
  stroke: #c9ccd0;
}

.mini-chev {
  width: 10px;
  height: 8px;
  margin-left: 19px;
  fill: none;
  stroke: #6a6a6a;
  stroke-width: 1.5;
}

.arrow-up {
  width: 16px;
  height: 24px;
  margin-left: 18px;
  fill: none;
  stroke: #5a5f66;
  stroke-width: 1.4;
}

.addr {
  flex: 1;
  display: flex;
  align-items: center;
  padding-left: 4px;
  border: 1px solid #d9d9d9;
  color: #111;
  font-size: 17.2px;
  white-space: nowrap;
}

.addr-folder {
  margin-right: -4px;
}

.crumb-sep {
  width: 8px;
  height: 14px;
  margin: 0 13px 0 12px;
  fill: none;
  stroke: #6a6a6a;
  stroke-width: 2;
}

.addr-drop {
  margin-left: auto;
  width: 44px;
  display: flex;
  justify-content: center;
}

.drop-chev {
  width: 14px;
  height: 10px;
  fill: none;
  stroke: #6a6a6a;
  stroke-width: 2.4;
}

.addr-refresh {
  width: 47px;
  align-self: stretch;
  border-left: 1px solid #d9d9d9;
  display: flex;
  align-items: center;
  justify-content: center;
}

.refresh {
  width: 20px;
  height: 22px;
  fill: none;
  stroke: #777;
  stroke-width: 2.6;
}

.search {
  flex: none;
  width: 238px;
  display: flex;
  align-items: center;
  gap: 17px;
  padding-left: 21px;
  border: 1px solid #d9d9d9;
  color: #6d6d6d;
  white-space: nowrap;
}

.lens {
  width: 22px;
  height: 25px;
  fill: none;
  stroke: #7d7d7d;
  stroke-width: 1.2;
}

/* Nav pane and list */
.body {
  flex: 1;
  display: flex;
  min-height: 0;
}

.nav {
  flex: none;
  width: 239px;
  padding: 32px 3px 0 0;
  border-right: 1px solid #f0f0f0;
}

.nav-group {
  margin-bottom: 12px;
}

.nav-row {
  display: flex;
  align-items: center;
  height: 36px;
  padding: 0 4px 0 50px;
  gap: 4px;
  margin-left: 1px;
  white-space: nowrap;
}

.nav-row.top {
  padding-left: 36px;
  gap: 6px;
}

.nav-row.active {
  background: #d9d9d9;
}

.pin {
  width: 17px;
  height: 17px;
  margin-left: auto;
}

.list {
  flex: 1;
  padding-left: 23px;
}

.cols-zip {
  display: grid;
  grid-template-columns: 384px 271px 215px 136px 216px 134px 1fr;
  width: 1620px;
}

.cols-db {
  display: grid;
  grid-template-columns: 438px 242px 204px 134px;
  width: 1018px;
}

.head {
  height: 57px;
  padding: 7px 0 16px;
  color: #4c607a;
}

.head.cols-zip {
  width: 1625px;
}

.hcell {
  position: relative;
  padding: 3px 0 0 9px;
  border-left: 1px solid #e5e5e5;
  line-height: 38px;
  white-space: nowrap;
}

.hcell:first-child {
  border-left: none;
  padding-left: 6px;
}

.hcell:last-child {
  border-right: 1px solid #e5e5e5;
}

.sort {
  position: absolute;
  left: 50%;
  top: -2px;
  width: 14px;
  height: 8px;
  margin-left: -7px;
  fill: none;
  stroke: #8a8a8a;
}

.row {
  height: 32px;
  align-items: center;
}

.row.sel {
  background: #cce8ff;
  box-shadow: inset 0 -1px 0 #a5d3f3;
}

.row.focus {
  box-shadow: inset 0 0 0 1px #99d1ff;
}

.cell {
  padding-left: 10px;
  color: #6d6d6d;
  white-space: nowrap;
  overflow: hidden;
}

.cell.num {
  padding: 0 12px 0 0;
  text-align: right;
}

.cell.name {
  display: flex;
  align-items: center;
  padding-left: 7px;
  gap: 7px;
  color: #1a1a1a;
}

.fi {
  width: 22px;
  height: 20px;
}
```
